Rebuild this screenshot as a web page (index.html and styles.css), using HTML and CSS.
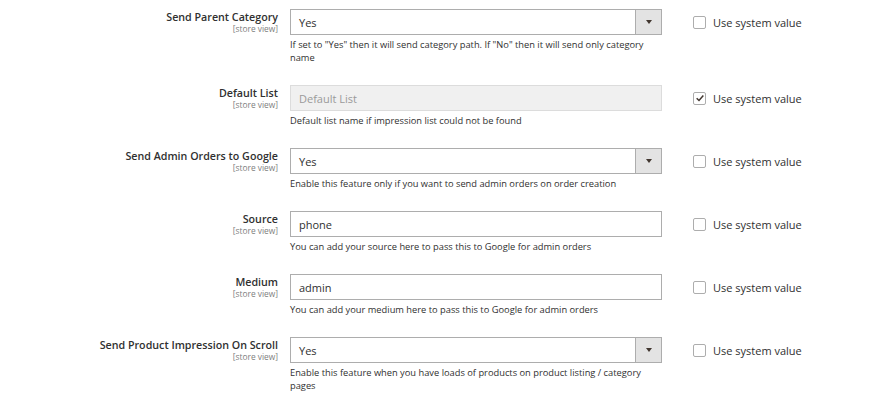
FILE: index.html
```html
<!DOCTYPE html>
<html>
<head>
<meta charset="utf-8">
<link rel="stylesheet" href="styles.css">
</head>
<body>
<div class="form">
  <div class="row">
    <div class="label"><span class="title">Send Parent Category</span><span class="scope">[store view]</span></div>
    <div class="value">
      <div class="control select"><span class="text">Yes</span><span class="btn"><span class="arrow"></span></span></div>
      <p class="note">If set to "Yes" then it will send category path. If "No" then it will send only category name</p>
    </div>
    <div class="use"><span class="cb"></span><span class="usetext">Use system value</span></div>
  </div>
  <div class="row">
    <div class="label"><span class="title">Default List</span><span class="scope">[store view]</span></div>
    <div class="value">
      <div class="control disabled"><span class="text">Default List</span></div>
      <p class="note">Default list name if impression list could not be found</p>
    </div>
    <div class="use"><span class="cb checked"><svg viewBox="0 0 12 12" width="10" height="10"><path d="M2 6.2 L4.8 9 L10 3" fill="none" stroke="#41362f" stroke-width="1.8"/></svg></span><span class="usetext">Use system value</span></div>
  </div>
  <div class="row">
    <div class="label"><span class="title">Send Admin Orders to Google</span><span class="scope">[store view]</span></div>
    <div class="value">
      <div class="control select"><span class="text">Yes</span><span class="btn"><span class="arrow"></span></span></div>
      <p class="note">Enable this feature only if you want to send admin orders on order creation</p>
    </div>
    <div class="use"><span class="cb"></span><span class="usetext">Use system value</span></div>
  </div>
  <div class="row">
    <div class="label"><span class="title">Source</span><span class="scope">[store view]</span></div>
    <div class="value">
      <div class="control"><span class="text">phone</span></div>
      <p class="note">You can add your source here to pass this to Google for admin orders</p>
    </div>
    <div class="use"><span class="cb"></span><span class="usetext">Use system value</span></div>
  </div>
  <div class="row">
    <div class="label"><span class="title">Medium</span><span class="scope">[store view]</span></div>
    <div class="value">
      <div class="control"><span class="text">admin</span></div>
      <p class="note">You can add your medium here to pass this to Google for admin orders</p>
    </div>
    <div class="use"><span class="cb"></span><span class="usetext">Use system value</span></div>
  </div>
  <div class="row">
    <div class="label"><span class="title">Send Product Impression On Scroll</span><span class="scope">[store view]</span></div>
    <div class="value">
      <div class="control select"><span class="text">Yes</span><span class="btn"><span class="arrow"></span></span></div>
      <p class="note">Enable this feature when you have loads of products on product listing / category pages</p>
    </div>
    <div class="use"><span class="cb"></span><span class="usetext">Use system value</span></div>
  </div>
</div>
</body>
</html>
```
FILE: styles.css
```css
html, body {
  margin: 0;
  padding: 0;
  background: #ffffff;
}
body {
  font-family: "Open Sans", "Liberation Sans", sans-serif;
  color: #303030;
}
.form {
  padding-top: 9px;
  display: flex;
  flex-direction: column;
  gap: 21px;
}
.row {
  display: grid;
  grid-template-columns: 278px 372px auto;
  column-gap: 12px;
  align-items: start;
}
.label {
  display: flex;
  flex-direction: column;
  align-items: flex-end;
  text-align: right;
  padding-top: 2px;
}
.title {
  font-size: 10.7px;
  font-weight: 600;
  line-height: 13px;
  color: #303030;
}
.scope {
  font-size: 8.4px;
  line-height: 10px;
  color: #808080;
}
.value {
  display: flex;
  flex-direction: column;
}
.control {
  box-sizing: border-box;
  height: 26px;
  border: 1px solid #adadad;
  background: #fff;
  display: flex;
  align-items: center;
  font-size: 11px;
  color: #303030;
}
.control .text {
  flex: 1;
  padding-left: 8px;
}
.control.disabled {
  background: #f0f0f0;
  border-color: #dcdcdc;
}
.control.disabled .text {
  color: #9a9a9a;
}
.btn {
  box-sizing: border-box;
  width: 26px;
  align-self: stretch;
  background: #e3e3e3;
  border-left: 1px solid #adadad;
  display: flex;
  align-items: center;
  justify-content: center;
}
.arrow {
  width: 0;
  height: 0;
  border-left: 3px solid transparent;
  border-right: 3px solid transparent;
  border-top: 4px solid #41362f;
}
.note {
  margin: 3px 0 0;
  font-size: 9.3px;
  line-height: 13px;
  color: #303030;
}
.use {
  display: flex;
  align-items: center;
  height: 26px;
  padding-left: 19px;
  gap: 7px;
}
.cb {
  box-sizing: border-box;
  width: 13px;
  height: 13px;
  border: 1px solid #adadad;
  border-radius: 2px;
  background: #fff;
  display: flex;
  align-items: center;
  justify-content: center;
}
.usetext {
  font-size: 11px;
  color: #303030;
}
```
